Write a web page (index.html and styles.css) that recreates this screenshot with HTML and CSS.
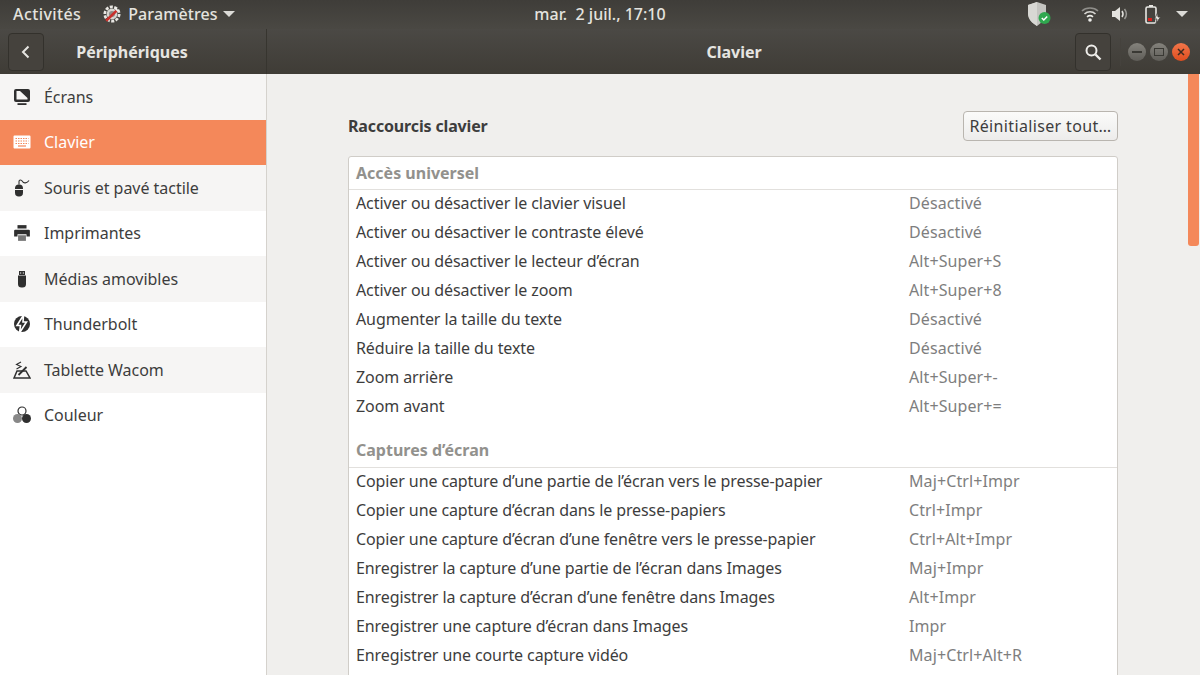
FILE: index.html
```html
<!DOCTYPE html>
<html lang="fr">
<head>
    <meta charset="UTF-8">
    <title>Clavier</title>
    <link rel="stylesheet" href="styles.css">
</head>
<body>
<div class="topbar">
    <div class="top-left">
        <span class="top-item">Activités</span>
        <span class="top-app">
            <svg class="app-icon" viewBox="0 0 20 20">
                <circle cx="10" cy="10" r="8" fill="none" stroke="#e8e6e2" stroke-width="3" stroke-dasharray="3.4 1.6"/>
                <circle cx="10" cy="10" r="6" fill="#d6d4cf"/>
                <circle cx="10" cy="10" r="3.4" fill="#8f8d88"/>
                <path d="M3.5 17.5 L15.5 6" stroke="#c9302c" stroke-width="3"/>
                <path d="M13 3 L17 7" stroke="#f0efeb" stroke-width="2"/>
            </svg>
            <span class="app-name">Paramètres</span>
            <span class="caret app-caret"></span>
        </span>
    </div>
    <div class="clock">mar.  2 juil., 17:10</div>
    <div class="tray">
        <svg class="tray-shield" viewBox="0 0 24 26">
            <path d="M10 1 L19 4 V12 C19 18 14 22 10 25 C5 22 1 18 1 12 V4 Z" fill="#c4c4c0"/>
            <path d="M10 1 L1 4 V12 C1 18 5 22 10 25 Z" fill="#d8d8d4"/>
            <circle cx="17.5" cy="17" r="6" fill="#2fa84f"/>
            <path d="M14.8 17 L16.8 19 L20.2 15.4" fill="none" stroke="#fff" stroke-width="1.5"/>
        </svg>
        <svg class="tray-wifi" viewBox="0 0 18 16">
            <path d="M1 5 C5 1 13 1 17 5" fill="none" stroke="#8f8e8a" stroke-width="1.6"/>
            <path d="M3.5 8 C6.5 5 11.5 5 14.5 8" fill="none" stroke="#d8d7d3" stroke-width="1.6"/>
            <path d="M6 10.8 C8 9.2 10 9.2 12 10.8" fill="none" stroke="#eeeeea" stroke-width="1.6"/>
            <circle cx="9" cy="14" r="1.8" fill="#eeeeea"/>
        </svg>
        <svg class="tray-vol" viewBox="0 0 18 16">
            <path d="M1 5 H4 L9 1 V15 L4 11 H1 Z" fill="#e4e3df"/>
            <path d="M11 5 C12.4 7 12.4 9 11 11" fill="none" stroke="#e4e3df" stroke-width="1.5"/>
            <path d="M13.5 3 C15.8 6 15.8 10 13.5 13" fill="none" stroke="#9a9995" stroke-width="1.5"/>
        </svg>
        <svg class="tray-bat" viewBox="0 0 16 20">
            <rect x="1" y="3" width="10" height="16" rx="1.5" fill="none" stroke="#e8e7e3" stroke-width="1.6"/>
            <rect x="4" y="1" width="4" height="2" fill="#e8e7e3"/>
            <rect x="3" y="14" width="4" height="3" fill="#d8201c"/>
            <path d="M12.5 9 L9.5 15 H12 L11 19.5 L15.5 13 H13 Z" fill="#e8e7e3" stroke="#45433e" stroke-width="0.8"/>
        </svg>
        <span class="caret"></span>
    </div>
</div>

<div class="headerbar">
    <div class="header-side">
        <button class="hd-btn">
            <svg viewBox="0 0 16 16" class="hd-icon"><path d="M10.5 2.5 L5 8 L10.5 13.5" fill="none" stroke="#e6e5e1" stroke-width="2"/></svg>
        </button>
        <div class="side-title">Périphériques</div>
    </div>
    <div class="header-main">
        <div class="main-title">Clavier</div>
        <button class="hd-btn">
            <svg viewBox="0 0 18 18" class="hd-icon search-icon"><circle cx="7.5" cy="7.5" r="5" fill="none" stroke="#eeedea" stroke-width="2"/><path d="M11.5 11.5 L16.5 16.5" stroke="#eeedea" stroke-width="2.4"/></svg>
        </button>
        <div class="win-btns">
            <span class="win-btn"><i class="w-min"></i></span>
            <span class="win-btn"><i class="w-max"></i></span>
            <span class="win-btn close">
                <svg viewBox="0 0 10 10"><path d="M2 2 L8 8 M8 2 L2 8" stroke="#3c2a20" stroke-width="1.5"/></svg>
            </span>
        </div>
    </div>
</div>

<div class="content">
    <div class="sidebar">
        <div class="side-row">
            <svg class="side-icon" viewBox="0 0 18 18"><path d="M3 1 H15 A2 2 0 0 1 17 3 V12 A2 2 0 0 1 15 14 H3 A2 2 0 0 1 1 12 V3 A2 2 0 0 1 3 1 Z M3.5 3 V11.5 H14.5 V10 L7 3 Z" fill="#2f2f2f" fill-rule="evenodd"/><rect x="4.5" y="15.2" width="9" height="1.8" fill="#2f2f2f"/></svg>
            Écrans
        </div>
        <div class="side-row active">
            <svg class="side-icon" viewBox="0 0 18 14"><path d="M1.5 0.5 H16.5 A1 1 0 0 1 17.5 1.5 V12.5 A1 1 0 0 1 16.5 13.5 H1.5 A1 1 0 0 1 0.5 12.5 V1.5 A1 1 0 0 1 1.5 0.5 Z" fill="#fff"/><path d="M2.5 3.5 H15.5 M2.5 6 H15.5 M2.5 8.5 H15.5" stroke="#f4885a" stroke-width="1.1" stroke-dasharray="1.5 1"/><path d="M5 11 H13" stroke="#f4885a" stroke-width="1.2"/></svg>
            Clavier
        </div>
        <div class="side-row">
            <svg class="side-icon" viewBox="0 0 18 18"><rect x="2" y="5.5" width="8" height="12" rx="3.8" fill="#2f2f2f"/><path d="M2 10.5 H10" stroke="#f6f5f4" stroke-width="1"/><path d="M6 5.5 V2.5 C6 0.5 8.5 0.5 9.5 2.5 C10.5 4.5 14 4.5 16 1.5" fill="none" stroke="#2f2f2f" stroke-width="1.1"/></svg>
            Souris et pavé tactile
        </div>
        <div class="side-row">
            <svg class="side-icon" viewBox="0 0 16 16"><rect x="4" y="1" width="8" height="3" fill="#2f2f2f"/><path d="M2 5 H14 A1 1 0 0 1 15 6 V11 H12 V9 H4 V11 H1 V6 A1 1 0 0 1 2 5 Z" fill="#2f2f2f"/><rect x="4.5" y="10" width="7" height="5" fill="#777"/></svg>
            Imprimantes
        </div>
        <div class="side-row">
            <svg class="side-icon" viewBox="0 0 18 18"><path d="M6 1 H12 V5 H6 Z M7 2.5 V3.5 H8.2 V2.5 Z M9.8 2.5 V3.5 H11 V2.5 Z" fill="#2f2f2f" fill-rule="evenodd"/><path d="M5 5.5 H13 V14 A3.5 3.5 0 0 1 9.5 17.5 H8.5 A3.5 3.5 0 0 1 5 14 Z" fill="#2f2f2f"/></svg>
            Médias amovibles
        </div>
        <div class="side-row">
            <svg class="side-icon" viewBox="0 0 18 18"><circle cx="9" cy="9" r="8" fill="#2f2f2f"/><path d="M10.5 0 L4 10.5 H7.5 L6.5 18 L13.5 7 H10 Z" fill="#2f2f2f" stroke="#fff" stroke-width="1.6"/></svg>
            Thunderbolt
        </div>
        <div class="side-row">
            <svg class="side-icon" viewBox="0 0 18 18"><path d="M4 10 H13 L17 17 H1 Z" fill="none" stroke="#2f2f2f" stroke-width="1.5"/><path d="M5.5 14 L13.5 6" stroke="#2f2f2f" stroke-width="1.8"/><path d="M8 1 L3.5 3.5 L8 5.5 L3.5 8" fill="none" stroke="#2f2f2f" stroke-width="1.1"/></svg>
            Tablette Wacom
        </div>
        <div class="side-row">
            <svg class="side-icon" viewBox="0 0 18 18"><circle cx="9" cy="5" r="4" fill="none" stroke="#2f2f2f" stroke-width="1.2"/><circle cx="4.5" cy="12.5" r="4.5" fill="#888"/><circle cx="13.5" cy="12.5" r="4.5" fill="#2f2f2f"/></svg>
            Couleur
        </div>
    </div>

    <div class="main">
        <div class="pane">
            <div class="pane-head">
                <h2>Raccourcis clavier</h2>
                <button class="reset">Réinitialiser tout…</button>
            </div>
            <div class="list">
                <div class="group">Accès universel</div>
                <div class="row"><span>Activer ou désactiver le clavier visuel</span><span class="key">Désactivé</span></div>
                <div class="row"><span>Activer ou désactiver le contraste élevé</span><span class="key">Désactivé</span></div>
                <div class="row"><span>Activer ou désactiver le lecteur d’écran</span><span class="key">Alt+Super+S</span></div>
                <div class="row"><span>Activer ou désactiver le zoom</span><span class="key">Alt+Super+8</span></div>
                <div class="row"><span>Augmenter la taille du texte</span><span class="key">Désactivé</span></div>
                <div class="row"><span>Réduire la taille du texte</span><span class="key">Désactivé</span></div>
                <div class="row"><span>Zoom arrière</span><span class="key">Alt+Super+-</span></div>
                <div class="row"><span>Zoom avant</span><span class="key">Alt+Super+=</span></div>
                <div class="group next">Captures d’écran</div>
                <div class="row"><span>Copier une capture d’une partie de l’écran vers le presse-papier</span><span class="key">Maj+Ctrl+Impr</span></div>
                <div class="row"><span>Copier une capture d’écran dans le presse-papiers</span><span class="key">Ctrl+Impr</span></div>
                <div class="row"><span>Copier une capture d’écran d’une fenêtre vers le presse-papier</span><span class="key">Ctrl+Alt+Impr</span></div>
                <div class="row"><span>Enregistrer la capture d’une partie de l’écran dans Images</span><span class="key">Maj+Impr</span></div>
                <div class="row"><span>Enregistrer la capture d’écran d’une fenêtre dans Images</span><span class="key">Alt+Impr</span></div>
                <div class="row"><span>Enregistrer une capture d’écran dans Images</span><span class="key">Impr</span></div>
                <div class="row"><span>Enregistrer une courte capture vidéo</span><span class="key">Maj+Ctrl+Alt+R</span></div>
            </div>
        </div>
        <div class="scroll-thumb"></div>
    </div>
</div>
</body>
</html>
```

FILE: styles.css
```css
*{
    margin: 0;
    padding: 0;
    box-sizing: border-box;
}
html, body{
    height: 100%;
    overflow: hidden;
}
body{
    display: flex;
    flex-direction: column;
    font-family: "Noto Sans", "Open Sans", sans-serif;
    font-size: 16px;
    letter-spacing: -0.1px;
    color: #3d3d3d;
    background: #f0efed;
}
button{
    font-family: inherit;
}

/* top panel */
.topbar{
    height: 29px;
    flex: none;
    display: grid;
    grid-template-columns: 1fr auto 1fr;
    align-items: center;
    padding: 0 13px 2px;
    background: linear-gradient(#3f3d39, #4a4843);
    color: #e4e3df;
    font-size: 16px;
    font-weight: 500;
}
.top-item{
    letter-spacing: 0.4px;
}
.top-left{
    display: flex;
    align-items: center;
    gap: 22px;
}
.top-app{
    display: flex;
    align-items: center;
    gap: 7px;
}
.app-name{
    letter-spacing: 0.1px;
}
.app-icon{
    width: 18px;
    height: 18px;
}
.caret{
    display: inline-block;
    width: 0;
    height: 0;
    border-left: 6px solid transparent;
    border-right: 6px solid transparent;
    border-top: 6px solid #dcdbd7;
}
.app-caret{
    margin-left: -2px;
}
.clock{
    white-space: pre;
    letter-spacing: 0;
}
.tray{
    display: flex;
    align-items: center;
    justify-content: flex-end;
    margin-right: -1px;
}
.tray-shield{
    width: 24px;
    height: 26px;
    margin-right: 30px;
}
.tray-wifi{
    width: 18px;
    height: 16px;
    margin-right: 12px;
}
.tray-vol{
    width: 18px;
    height: 16px;
    margin-right: 15px;
}
.tray-bat{
    width: 18px;
    height: 20px;
    margin-right: 14px;
}

/* header bar */
.headerbar{
    height: 45px;
    flex: none;
    display: flex;
    background: linear-gradient(#4b4945, #3f3c36);
    color: #e6e5e1;
    font-weight: 700;
    font-size: 16px;
    letter-spacing: 0;
}
.header-side{
    width: 267px;
    flex: none;
    display: flex;
    align-items: center;
    padding-left: 8px;
    border-right: 1px solid #37352f;
}
.side-title{
    width: 176px;
    text-align: center;
}
.header-main{
    flex: 1;
    display: flex;
    align-items: center;
    padding-right: 10px;
}
.main-title{
    flex: 1;
    text-align: center;
    padding-left: 126px;
}
.hd-btn{
    width: 36px;
    height: 38px;
    display: flex;
    align-items: center;
    justify-content: center;
    background: #45423d;
    border: 1px solid #33312c;
    border-radius: 4px;
}
.hd-icon{
    width: 16px;
    height: 16px;
}
.search-icon{
    width: 18px;
    height: 18px;
}
.win-btns{
    display: flex;
    gap: 4px;
    margin-left: 9px;
    padding-left: 7px;
    border-left: 1px solid #45423d;
    height: 28px;
    align-items: center;
}
.win-btn{
    width: 18px;
    height: 18px;
    border-radius: 50%;
    background: linear-gradient(#84827c, #5f5d58);
    display: flex;
    align-items: center;
    justify-content: center;
}
.win-btn.close{
    background: linear-gradient(#f2764a, #de4d1f);
}
.win-btn svg{
    width: 10px;
    height: 10px;
}
.w-min{
    width: 10px;
    height: 2px;
    background: #3a3934;
}
.w-max{
    width: 10px;
    height: 8px;
    border: 1px solid #3a3934;
}

/* sidebar */
.content{
    flex: 1;
    display: flex;
    min-height: 0;
}
.sidebar{
    width: 267px;
    flex: none;
    background: #fff;
    border-right: 1px solid #d5d2cd;
}
.side-row{
    height: 45.5px;
    display: flex;
    align-items: center;
    gap: 13px;
    padding-left: 13px;
    letter-spacing: -0.03px;
    color: #3d3d3d;
}
.side-row:nth-child(odd){
    background: #f6f5f4;
}
.side-row.active{
    background: #f4885a;
    color: #fff;
}
.side-icon{
    width: 18px;
    height: 18px;
    flex: none;
}

/* right side */
.main{
    flex: 1;
    position: relative;
    overflow: hidden;
}
.pane{
    width: 770px;
    margin-left: 81px;
    padding-top: 37px;
}
.pane-head{
    height: 30px;
    display: flex;
    align-items: center;
    justify-content: space-between;
}
.pane-head h2{
    font-size: 16px;
    font-weight: 700;
    letter-spacing: -0.15px;
    color: #3d3d3d;
}
.reset{
    width: 155px;
    height: 30px;
    font-size: 16px;
    letter-spacing: 0.35px;
    color: #3d3d3d;
    background: linear-gradient(#fbfbfa, #edeceb);
    border: 1px solid #b9b5af;
    border-radius: 4px;
}
.list{
    margin-top: 15px;
    padding-bottom: 60px;
    background: #fff;
    border: 1px solid #d0cdc8;
    border-radius: 3px 3px 0 0;
}
.group{
    height: 33px;
    line-height: 32px;
    padding-left: 7px;
    font-weight: 700;
    font-size: 16px;
    letter-spacing: 0;
    color: #92918d;
    border-bottom: 1px solid #e2e0dd;
}
.group.next{
    height: 46px;
    padding-top: 12px;
}
.row{
    height: 29px;
    display: flex;
    align-items: center;
    padding-left: 7px;
    padding-bottom: 4px;
}
.row span:first-child{
    width: 553px;
    flex: none;
}
.key{
    color: #7e7e7e;
    letter-spacing: 0.1px;
}

.scroll-thumb{
    position: absolute;
    top: 0;
    right: 1px;
    width: 11px;
    height: 172px;
    background: #f4885a;
    border-radius: 0 0 3px 3px;
}
```
